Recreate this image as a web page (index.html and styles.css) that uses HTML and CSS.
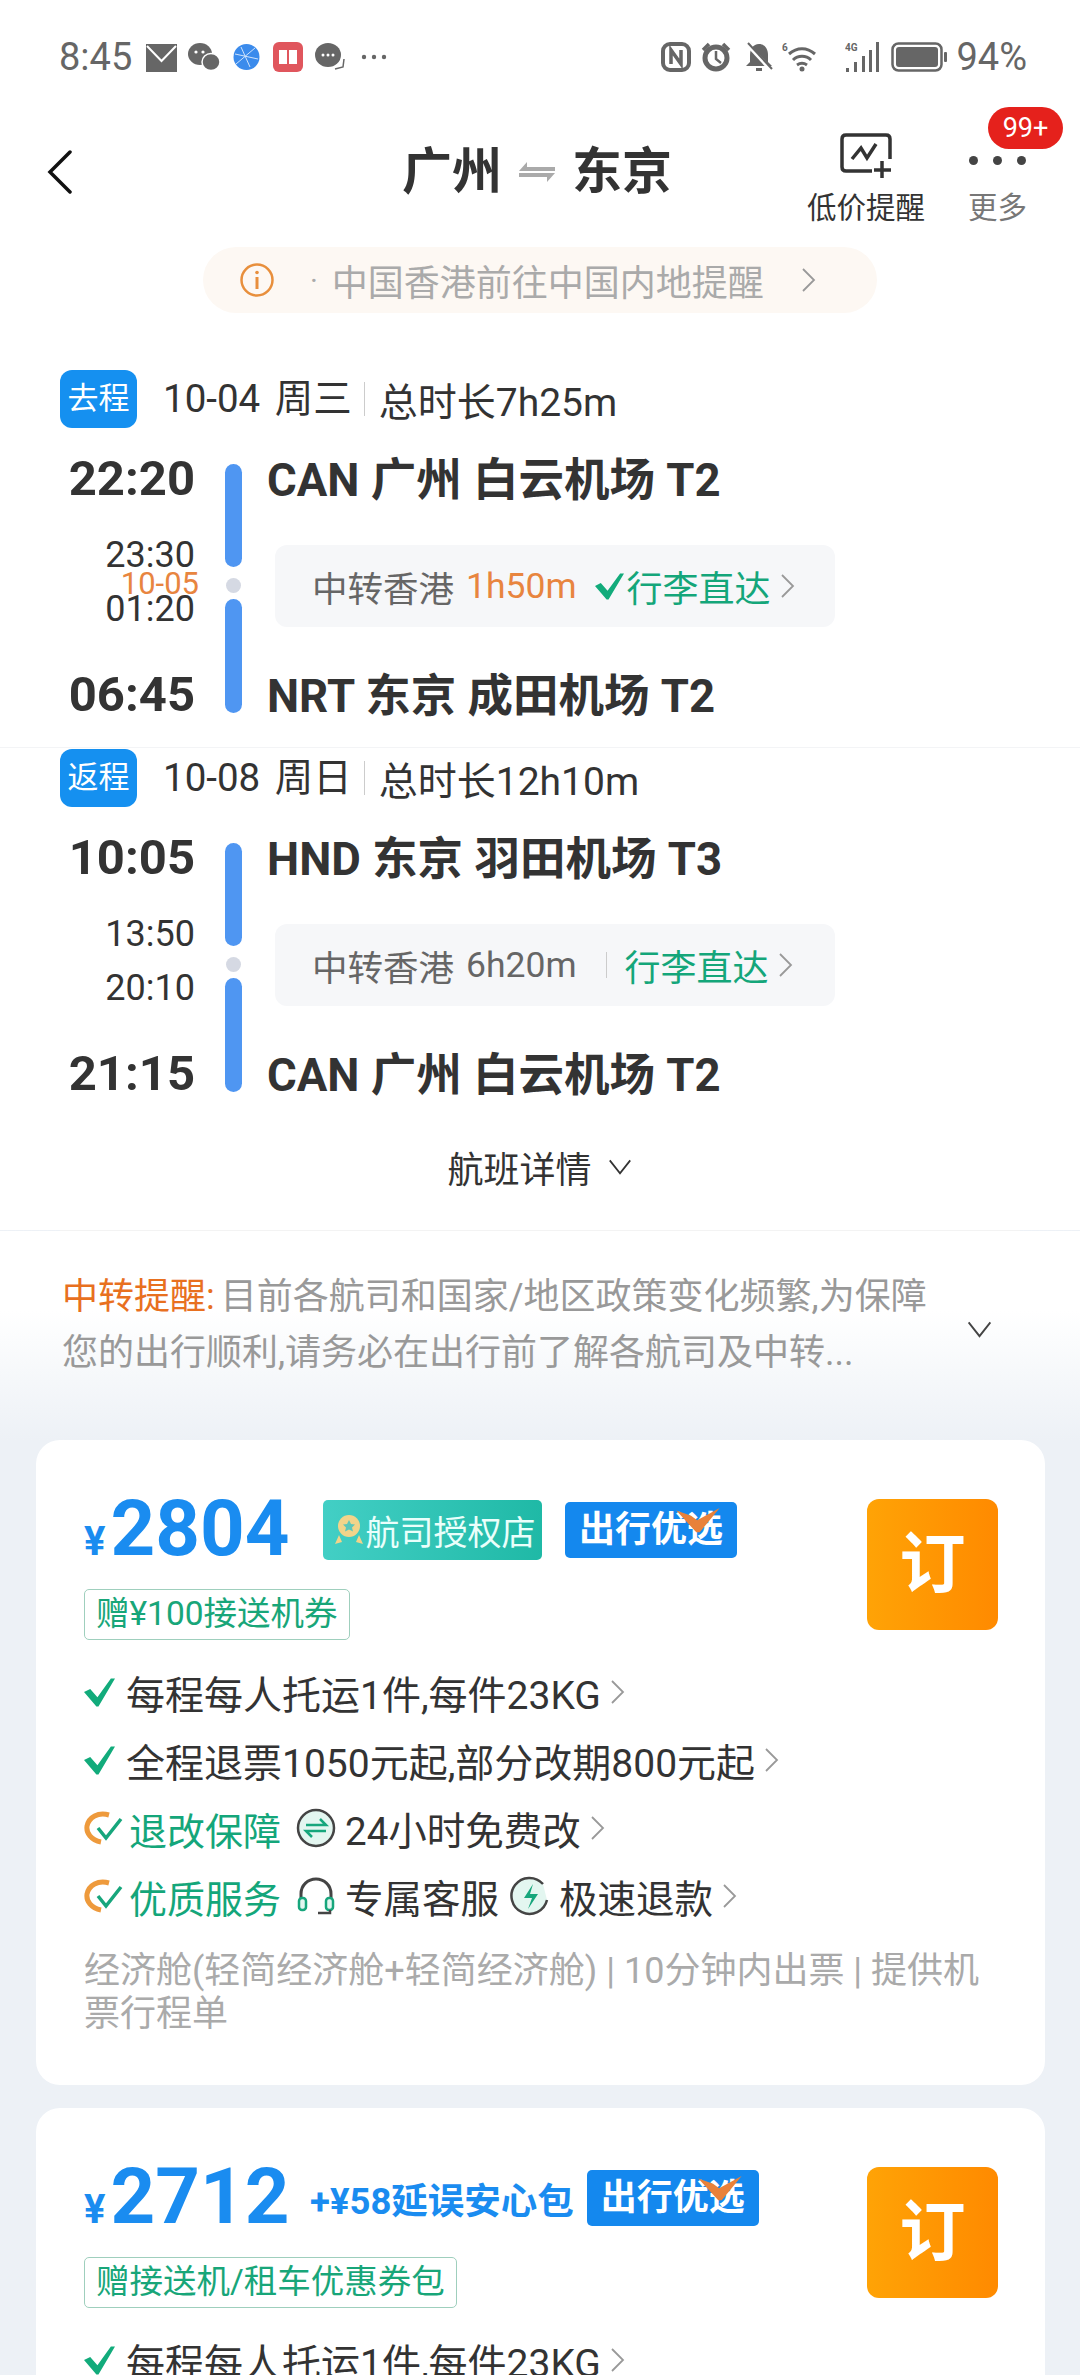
FILE: index.html
```html
<!DOCTYPE html>
<html lang="zh-CN">
<head>
  <meta charset="UTF-8">
  <meta name="viewport" content="width=device-width, initial-scale=1.0">
  <title>广州 东京</title>
  <link rel="stylesheet" href="styles.css">
</head>
<body>
  <svg class="defs" width="0" height="0">
    <symbol id="chev" viewBox="0 0 15 26"><path d="M2 2l11 11L2 24" fill="none" stroke="currentColor" stroke-width="1.8"/></symbol>
    <symbol id="down" viewBox="0 0 26 18"><path d="M1.500 1.500L13 16 24.500 1.500" fill="none" stroke="currentColor" stroke-width="2"/></symbol>
    <symbol id="tick" viewBox="0 0 30 28"><path d="M0 14l6-3 7 8L26 1h4L14 28h-2z" fill="#12ab7b"/></symbol>
    <symbol id="guard" viewBox="0 0 40 34">
      <path d="M17 31C7 29 2 22 3 15 5 6 14 1 25 4" fill="none" stroke="#ee9a3c" stroke-width="5"/>
      <path d="M14 17l8 10L37 8" fill="none" stroke="#17a67c" stroke-width="3.500"/>
    </symbol>
    <symbol id="flag" viewBox="0 0 50 30"><path d="M0 3l17 6 7 5L50 0 27 28h-4z" fill="#e8813a"/></symbol>
  </svg>

  <div class="status">
    <span class="clock">8:45</span>
    <svg class="st st-mail" viewBox="0 0 31 30"><path d="M0 2h31v28H0z" fill="#666"/><path d="M1 4l14.500 15L30 4" fill="none" stroke="#fff" stroke-width="2"/></svg>
    <svg class="st st-wechat" viewBox="0 0 32 30"><ellipse cx="12" cy="12" rx="12" ry="11" fill="#666"/><ellipse cx="23" cy="20" rx="9" ry="8.500" fill="#666" stroke="#fff" stroke-width="1.500"/><circle cx="8" cy="10" r="1.600" fill="#fff"/><circle cx="15" cy="10" r="1.600" fill="#fff"/></svg>
    <svg class="st st-globe" viewBox="0 0 27 30"><circle cx="13.500" cy="15" r="13" fill="#3b8bec"/><path d="M3 22L22 6M8 5l9 20M2 12l23 5" stroke="#cfe3fb" stroke-width="1" fill="none"/></svg>
    <svg class="st st-book" viewBox="0 0 30 30"><rect width="30" height="30" rx="6" fill="#e0565d"/><path d="M6 8h8v14H6zM16 8h8v14h-8z" fill="#fff"/></svg>
    <svg class="st st-chat" viewBox="0 0 30 30"><ellipse cx="13" cy="13" rx="13" ry="12" fill="#666"/><circle cx="8" cy="13" r="1.500" fill="#fff"/><circle cx="13" cy="13" r="1.500" fill="#fff"/><circle cx="18" cy="13" r="1.500" fill="#fff"/><path d="M20 27l8-2 1-8" fill="none" stroke="#666" stroke-width="1.500"/></svg>
    <svg class="st st-dots" viewBox="0 0 26 6"><circle cx="3" cy="3" r="2.200" fill="#666"/><circle cx="13" cy="3" r="2.200" fill="#666"/><circle cx="23" cy="3" r="2.200" fill="#666"/></svg>
    <span class="status-gap"></span>
    <svg class="st st-nfc" viewBox="0 0 30 30"><rect x="2" y="2" width="26" height="26" rx="7" fill="none" stroke="#666" stroke-width="4"/><path d="M10 22V8l10 14V8" fill="none" stroke="#666" stroke-width="3.500"/></svg>
    <svg class="st st-alarm" viewBox="0 0 30 30"><circle cx="15" cy="16" r="11" fill="none" stroke="#666" stroke-width="5"/><path d="M15 9v8l5 4" fill="none" stroke="#666" stroke-width="2.500"/><path d="M2 8l6-6M28 8l-6-6" stroke="#666" stroke-width="3.500"/></svg>
    <svg class="st st-bell" viewBox="0 0 30 30"><path d="M15 2c6 0 9 5 9 11v7l4 4H2l4-4v-7C6 7 9 2 15 2z" fill="#666"/><path d="M12 26h6v3h-6z" fill="#666"/><path d="M3 2l24 26" stroke="#fff" stroke-width="4"/><path d="M4 1l24 26" stroke="#666" stroke-width="2"/></svg>
    <svg class="st st-wifi" viewBox="0 0 38 30"><path d="M7 12c8-7 18-7 26 0M11 18c5-5 13-5 18 0M15 23c3-2 7-2 10 0" fill="none" stroke="#666" stroke-width="3"/><circle cx="20" cy="27" r="2.500" fill="#666"/><text x="0" y="9" class="st-mini">6</text></svg>
    <svg class="st st-signal" viewBox="0 0 34 30"><path d="M1 26h3v4H1zM9 20h3v10H9zM17 14h3v16h-3zM24 8h3v22h-3zM31 0h3v30h-3z" fill="#666"/><text x="0" y="9" class="st-mini">4G</text></svg>
    <svg class="st st-batt" viewBox="0 0 56 30"><rect x="1.500" y="1.500" width="49" height="27" rx="6" fill="none" stroke="#666" stroke-width="2.500"/><rect x="5" y="5" width="42" height="20" rx="3" fill="#666"/><rect x="53" y="10" width="3" height="10" rx="1" fill="#666"/></svg>
    <span class="pct">94%</span>
  </div>

  <div class="nav">
    <svg class="back" viewBox="0 0 26 44"><path d="M23 2L3 22l20 20" fill="none" stroke="#111" stroke-width="3.500" stroke-linecap="round"/></svg>
    <div class="title">广州
      <svg class="swap" viewBox="0 0 36 20"><path d="M8 0L0 9h36V5H8zM28 20l8-9H0v4h28z" fill="#aaa"/></svg>
      东京</div>
    <div class="actions">
      <div class="act">
        <svg class="act-icon" viewBox="0 0 52 46"><path d="M32 38H6q-4 0-4-4V6q0-4 4-4h40q4 0 4 4v20" fill="none" stroke="#333" stroke-width="3.500"/><path d="M12 26l9-11 6 10 9-14" fill="none" stroke="#333" stroke-width="3.500"/><path d="M42 28v17M34 37h17" stroke="#333" stroke-width="3.500"/></svg>
        <span class="act-text">低价提醒</span>
      </div>
      <div class="act act-more">
        <div class="more-dots"><i></i><i></i><i></i></div>
        <span class="act-text light">更多</span>
        <span class="badge">99+</span>
      </div>
    </div>
  </div>

  <div class="notice">
    <svg class="info" viewBox="0 0 34 34"><circle cx="17" cy="17" r="15.500" fill="none" stroke="#e88f3c" stroke-width="2.500"/><path d="M17 14v12" stroke="#e88f3c" stroke-width="3"/><circle cx="17" cy="9.500" r="1.800" fill="#e88f3c"/></svg>
    <span class="notice-dot">·</span>
    <span class="notice-text">中国香港前往中国内地提醒</span>
    <svg class="notice-chev"><use href="#chev"/></svg>
  </div>

  <section class="seg first">
    <div class="seg-head">
      <span class="trip">去程</span>
      <span class="date">10-04 周三</span>
      <span class="dur">总时长7h25m</span>
    </div>
    <div class="seg-body">
      <div class="times">
        <b class="t-big">22:20</b>
        <div class="t-mid">
          <span>23:30</span>
          <span class="next-day">10-05</span>
          <span>01:20</span>
        </div>
        <b class="t-big t-end">06:45</b>
      </div>
      <div class="line"><i class="bar top"></i><i class="stop"></i><i class="bar"></i></div>
      <div class="route">
        <b class="port">CAN 广州 白云机场 T2</b>
        <div class="transfer">
          <span>中转香港</span>
          <span class="wait">1h50m</span>
          <svg class="transfer-tick"><use href="#tick"/></svg>
          <span class="bag tight">行李直达</span>
          <svg class="chev"><use href="#chev"/></svg>
        </div>
        <b class="port">NRT 东京 成田机场 T2</b>
      </div>
    </div>
  </section>

  <section class="seg">
    <div class="seg-head">
      <span class="trip">返程</span>
      <span class="date">10-08 周日</span>
      <span class="dur">总时长12h10m</span>
    </div>
    <div class="seg-body">
      <div class="times">
        <b class="t-big">10:05</b>
        <div class="t-mid">
          <span>13:50</span>
          <span>20:10</span>
        </div>
        <b class="t-big t-end">21:15</b>
      </div>
      <div class="line"><i class="bar top"></i><i class="stop"></i><i class="bar"></i></div>
      <div class="route">
        <b class="port">HND 东京 羽田机场 T3</b>
        <div class="transfer">
          <span>中转香港</span>
          <span class="wait-plain">6h20m</span>
          <i class="pipe"></i>
          <span class="bag">行李直达</span>
          <svg class="chev"><use href="#chev"/></svg>
        </div>
        <b class="port">CAN 广州 白云机场 T2</b>
      </div>
    </div>
  </section>

  <div class="detail">航班详情 <svg class="detail-down"><use href="#down"/></svg></div>

  <div class="tips">
    <p class="tips-text"><span class="tips-head">中转提醒:</span>目前各航司和国家/地区政策变化频繁,为保障您的出行顺利,请务必在出行前了解各航司及中转...</p>
    <svg class="tips-down"><use href="#down"/></svg>
  </div>

  <div class="list">
    <div class="card">
      <div class="card-top">
        <div class="card-main">
          <div class="price-row">
            <span class="price"><em>¥</em>2804</span>
            <span class="tag-auth">
              <svg class="medal" viewBox="0 0 30 34"><circle cx="15" cy="13" r="11" fill="#f2d48a"/><path d="M15 7l2 4 4 .5-3 3 1 4-4-2-4 2 1-4-3-3 4-.5z" fill="#5cc7ba"/><path d="M5 22L1 31l7-2M25 22l4 9-7-2" fill="#f2d48a"/></svg>航司授权店</span>
            <span class="tag-best">出行优选<svg class="flag"><use href="#flag"/></svg></span>
          </div>
          <span class="gift">赠¥100接送机券</span>
        </div>
        <div class="book">订</div>
      </div>
      <div class="row"><svg class="tick"><use href="#tick"/></svg><span>每程每人托运1件,每件23KG</span><svg class="chev"><use href="#chev"/></svg></div>
      <div class="row"><svg class="tick"><use href="#tick"/></svg><span>全程退票1050元起,部分改期800元起</span><svg class="chev"><use href="#chev"/></svg></div>
      <div class="row">
        <svg class="guard"><use href="#guard"/></svg>
        <span class="green">退改保障</span>
        <svg class="ico" viewBox="0 0 40 40"><circle cx="20" cy="20" r="18" fill="#e3f6f0" stroke="#444" stroke-width="2.500"/><path d="M10 17h20l-6-6M30 23H10l6 6" fill="none" stroke="#17a67c" stroke-width="2.500"/></svg>
        <span>24小时免费改</span>
        <svg class="chev"><use href="#chev"/></svg>
      </div>
      <div class="row">
        <svg class="guard"><use href="#guard"/></svg>
        <span class="green">优质服务</span>
        <svg class="ico" viewBox="0 0 40 40"><path d="M5 24v-6C5 9 12 3 20 3s15 6 15 15v6" fill="none" stroke="#444" stroke-width="3"/><rect x="3" y="22" width="7" height="12" rx="3" fill="#e3f6f0" stroke="#17a67c" stroke-width="2.500"/><rect x="30" y="22" width="7" height="12" rx="3" fill="#e3f6f0" stroke="#17a67c" stroke-width="2.500"/><path d="M34 34v3H22" fill="none" stroke="#444" stroke-width="2.500"/></svg>
        <span>专属客服</span>
        <svg class="ico ico-gap" viewBox="0 0 40 40"><path d="M33 8A18 18 0 1 0 37 24" fill="#e3f6f0" stroke="#444" stroke-width="2.500"/><path d="M23 8l-9 14h8l-4 11 10-15h-8z" fill="#17a67c"/></svg>
        <span>极速退款</span>
        <svg class="chev"><use href="#chev"/></svg>
      </div>
      <p class="desc">经济舱(轻简经济舱+轻简经济舱) | 10分钟内出票 | 提供机票行程单</p>
    </div>

    <div class="card">
      <div class="card-top">
        <div class="card-main">
          <div class="price-row">
            <span class="price"><em>¥</em>2712</span>
            <b class="addon">+¥58延误安心包</b>
            <span class="tag-best tag-tight">出行优选<svg class="flag"><use href="#flag"/></svg></span>
          </div>
          <span class="gift">赠接送机/租车优惠券包</span>
        </div>
        <div class="book">订</div>
      </div>
      <div class="row"><svg class="tick"><use href="#tick"/></svg><span>每程每人托运1件,每件23KG</span><svg class="chev"><use href="#chev"/></svg></div>
    </div>
  </div>
</body>
</html>
```

FILE: styles.css
```css
* { box-sizing: border-box; }
html, body { margin: 0; }
body {
  width: 1080px;
  height: 2375px;
  overflow: hidden;
  background: #fff;
  color: #333;
  font-family: Roboto, "Noto Sans CJK SC", sans-serif;
}
p { margin: 0; }
i, em { font-style: normal; }
.defs { position: absolute; }

/* status bar */
.status {
  height: 115px;
  padding: 42px 53px 0 59px;
  display: flex;
  align-items: flex-start;
  color: #666;
}
.clock, .pct { font-size: 38px; line-height: 30px; }
.clock { width: 87px; }
.st { height: 30px; display: block; flex: none; }
.st-mail { width: 31px; }
.st-wechat { width: 32px; margin-left: 11px; }
.st-globe { width: 27px; margin-left: 13px; }
.st-book { width: 30px; margin-left: 13px; }
.st-chat { width: 30px; margin-left: 12px; }
.st-dots { width: 26px; height: 6px; margin: 12px 0 0 16px; }
.status-gap { flex: 1; }
.st-nfc, .st-alarm, .st-bell { width: 30px; }
.st-alarm { margin-left: 10px; }
.st-bell { margin-left: 13px; }
.st-wifi { width: 38px; margin-left: 8px; }
.st-signal { width: 34px; margin-left: 25px; }
.st-batt { width: 56px; margin-left: 12px; }
.st-mini { font-size: 10px; font-weight: 700; fill: #666; }
.pct { margin-left: 9px; }

/* nav */
.nav {
  height: 132px;
  padding: 0 53px 0 47px;
  display: grid;
  grid-template-columns: 1fr auto 1fr;
  align-items: flex-start;
}
.back { width: 26px; height: 44px; margin-top: 35px; }
.title {
  margin-top: 25px;
  display: flex;
  align-items: center;
  gap: 17px;
  font-size: 50px;
  line-height: 64px;
  font-weight: 700;
}
.swap { width: 36px; height: 20px; }
.actions { display: flex; justify-content: flex-end; gap: 43px; }
.act { position: relative; display: flex; flex-direction: column; align-items: center; }
.act-icon { width: 52px; height: 46px; margin-top: 18px; }
.act-text { margin-top: 12px; font-size: 29.500px; line-height: 34px; }
.act-text.light { color: #777; }
.more-dots { height: 46px; margin-top: 18px; display: flex; gap: 15px; padding-top: 23px; }
.more-dots i { width: 9px; height: 9px; border-radius: 50%; background: #444; }
.badge {
  position: absolute;
  top: -8px;
  right: -36px;
  width: 75px;
  height: 42px;
  border-radius: 21px;
  background: #e5211c;
  color: #fff;
  font-size: 27px;
  line-height: 42px;
  text-align: center;
}

/* notice pill */
.notice {
  width: 674px;
  height: 66px;
  margin-left: 203px;
  padding-left: 37px;
  display: flex;
  align-items: center;
  border-radius: 33px;
  background: #fdf8f3;
}
.info { width: 34px; height: 34px; }
.notice-dot { margin-left: 36px; color: #aaa; font-size: 30px; }
.notice-text { margin-left: 14px; font-size: 36px; color: #aaa; white-space: nowrap; }
.notice-chev { width: 15px; height: 26px; margin-left: 37px; color: #999; }

/* segments */
.seg {
  margin-top: 57px;
  padding: 0 0 22px 60px;
  border-bottom: 1px solid #f3f4f6;
}
.seg + .seg { margin-top: 1px; border-bottom: 0; padding-bottom: 0; }
.seg-head { height: 58px; display: flex; align-items: center; font-size: 39px; }
.trip {
  width: 77px;
  height: 58px;
  border-radius: 12px;
  background: #1590f0;
  color: #fff;
  font-size: 31px;
  line-height: 58px;
  text-align: center;
}
.date {
  margin-left: 26px;
  padding-right: 12px;
  border-right: 1px solid #ccc;
  font-size: 38.500px;
  line-height: 34px;
  word-spacing: 5px;
}
.dur { margin-left: 14px; }
.seg-body { margin-top: 25px; height: 272px; display: flex; }
.times {
  width: 135px;
  padding-bottom: 5px;
  display: flex;
  flex-direction: column;
  align-items: flex-end;
}
.t-big { margin-top: 1px; font-size: 49px; line-height: 50px; font-weight: 700; }
.t-end { margin-top: auto; }
.t-mid {
  position: relative;
  margin-top: 36px;
  height: 84px;
  display: flex;
  flex-direction: column;
  justify-content: space-between;
  align-items: flex-end;
  font-size: 36px;
  line-height: 30px;
}
.next-day {
  position: absolute;
  top: 32px;
  right: -4px;
  color: #e8853f;
  font-size: 31px;
  line-height: 24px;
}
.line {
  width: 17px;
  margin-left: 30px;
  padding: 11px 0 12px;
  display: flex;
  flex-direction: column;
  align-items: center;
}
.bar { width: 17px; flex: 1; border-radius: 9px; background: #4f96f2; }
.bar.top { flex: none; height: 103px; }
.stop { width: 15px; height: 15px; margin: 11px 0 6px; border-radius: 50%; background: #d5d9e3; }
.route {
  margin-left: 25px;
  display: flex;
  flex-direction: column;
  justify-content: space-between;
}
.port { font-size: 45.500px; line-height: 56px; font-weight: 700; white-space: nowrap; }
.transfer {
  width: 560px;
  height: 82px;
  margin: 0 0 6px 8px;
  padding-left: 37px;
  display: flex;
  align-items: center;
  border-radius: 12px;
  background: #f6f7f9;
  color: #666;
  font-size: 35.500px;
}
.wait { margin-left: 12px; color: #e8853f; }
.wait-plain { margin-left: 12px; }
.pipe { width: 1px; height: 26px; margin-left: 29px; background: #ccc; }
.transfer-tick { width: 29px; height: 28px; margin-left: 18px; flex: none; }
.bag { margin-left: 18px; color: #14a67a; font-size: 36px; }
.bag.tight { margin-left: 3px; }
.chev { width: 15px; height: 26px; margin-left: 9px; color: #999; flex: none; }

/* details and tips */
.detail {
  margin-top: 38px;
  height: 50px;
  display: flex;
  justify-content: center;
  align-items: center;
  gap: 15px;
  font-size: 36px;
  color: #333;
}
.detail-down { width: 26px; height: 16px; color: #333; }
.tips {
  position: relative;
  margin-top: 38px;
  padding: 38px 130px 59px 62px;
  border-top: 1px solid transparent;
  background: linear-gradient(#fff 38%, #edf1f6 100%);
}
.tips::before {
  content: "";
  position: absolute;
  top: -1px;
  left: 60px;
  right: 60px;
  height: 1px;
  background: #f3f3f3;
}
.tips-text { font-size: 36px; line-height: 56px; color: #999; height: 112px; overflow: hidden; }
.tips-head { margin-right: 6px; color: #e8701f; }
.tips-down { position: absolute; left: 966px; top: 90px; width: 27px; height: 17px; color: #444; }

/* cards */
.list { padding: 0 35px 0 36px; background: #edf1f6; }
.card {
  margin-bottom: 23px;
  padding: 59px 47px 49px 48px;
  border-radius: 24px;
  background: #fff;
}
.card-top { display: flex; justify-content: space-between; align-items: flex-start; }
.price-row { height: 62px; display: flex; align-items: center; }
.price { width: 207px; flex: none; padding-top: 10px; color: #1a8cf0; font-size: 78px; line-height: 62px; font-weight: 700; }
.price em { margin-right: 5px; font-size: 40px; }
.tag-auth {
  height: 60px;
  width: 219px;
  margin-left: 32px;
  padding-left: 4px;
  display: flex;
  align-items: center;
  justify-content: center;
  gap: 2px;
  border-radius: 5px;
  background: linear-gradient(90deg, #43cfc5, #1fb9a6);
  color: #eafffb;
  font-size: 34px;
  white-space: nowrap;
}
.medal { width: 30px; height: 34px; flex: none; }
.tag-best {
  position: relative;
  width: 172px;
  height: 56px;
  margin-left: 23px;
  border-radius: 5px;
  background: #1488ee;
  color: #fff;
  font-size: 36px;
  line-height: 56px;
  font-weight: 700;
  text-align: center;
  white-space: nowrap;
}
.tag-tight { margin-left: 13px; }
.flag { position: absolute; left: 111px; top: 6px; width: 44px; height: 26px; }
.addon { margin-left: 19px; color: #1a8cf0; font-size: 36.500px; white-space: nowrap; }
.gift {
  display: inline-block;
  margin-top: 28px;
  height: 51px;
  padding: 0 11px;
  border: 1px solid #9fcfbd;
  border-radius: 5px;
  color: #18a679;
  font-size: 33.500px;
  line-height: 47px;
  white-space: nowrap;
}
.book {
  width: 131px;
  height: 131px;
  flex: none;
  border-radius: 12px;
  background: linear-gradient(90deg, #ffa306, #ff8a00);
  color: #fff;
  font-size: 66px;
  line-height: 131px;
  font-weight: 700;
  text-align: center;
}
.row {
  height: 68px;
  display: flex;
  align-items: center;
  font-size: 38.500px;
  white-space: nowrap;
}
.card-top + .row { margin-top: 18px; }
.tick { width: 31px; height: 30px; margin-right: 11px; flex: none; }
.tick + span { font-size: 39px; }
.guard { width: 40px; height: 34px; margin-right: 5px; flex: none; }
.green { color: #14a67a; font-size: 38px; }
.ico { width: 40px; height: 40px; margin: 0 9px 0 15px; flex: none; }
.ico-gap { margin-left: 11px; }
.desc {
  width: 905px;
  margin-top: 20px;
  color: #aaa;
  font-size: 36px;
  line-height: 43px;
}
```
